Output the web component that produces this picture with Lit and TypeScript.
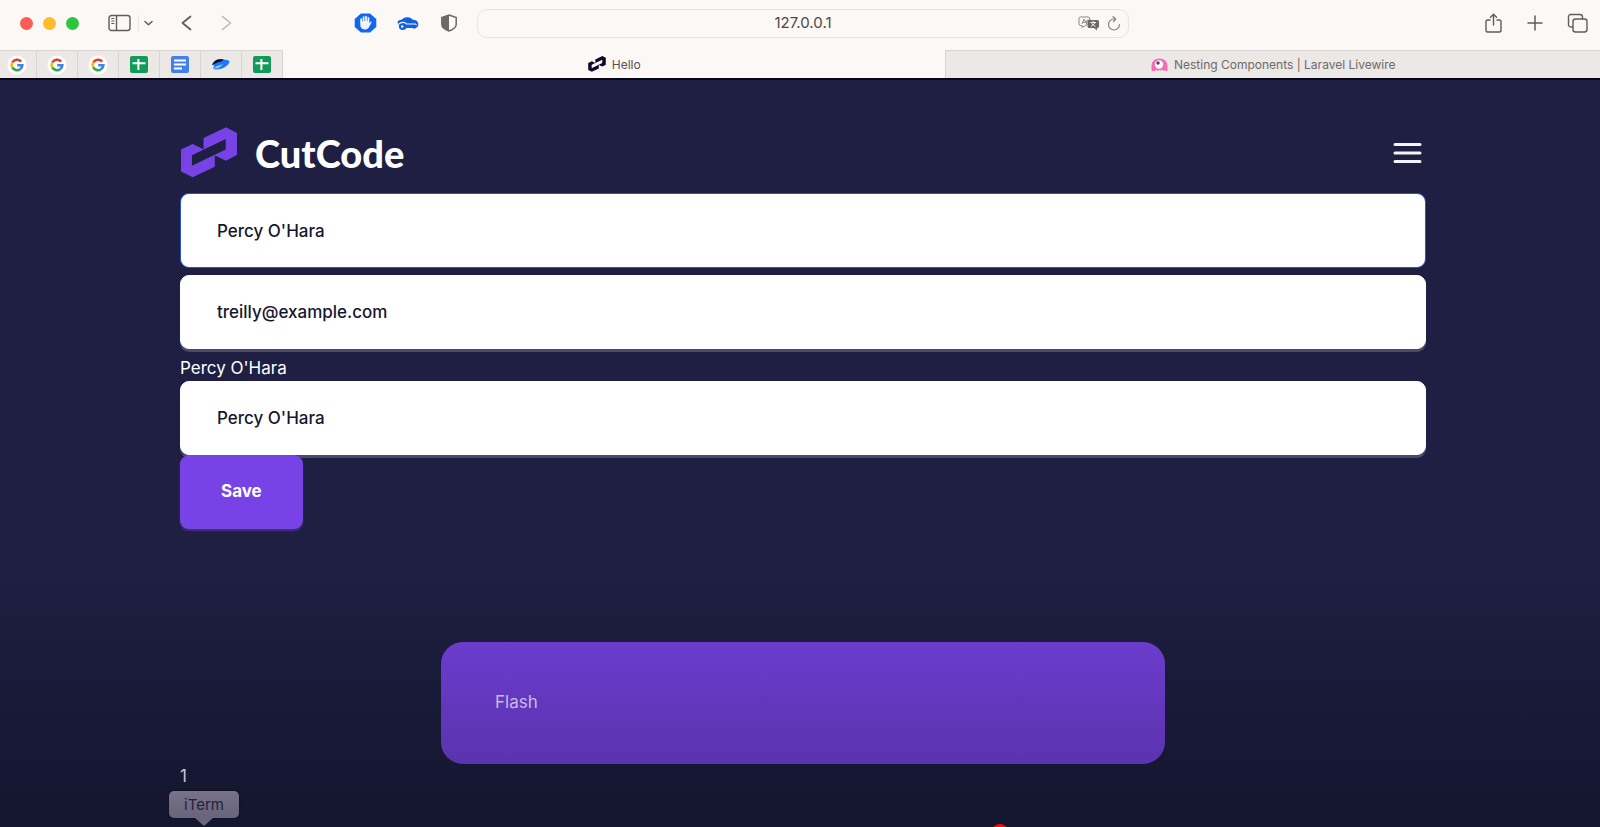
import { LitElement, html, css, svg } from "lit";
import { customElement, state } from "lit/decorators.js";

const cutcodeMark = svg`<path fill="currentColor" fill-rule="evenodd" d="M62 118L97 101L130 117V83L198 51L231 68V134L198 152L164 136V170L97 202L62 184ZM95 135V167L197 118V86Z"/>`;

const googleIcon = html`<svg width="20" height="20" viewBox="0 0 20 20" aria-hidden="true">
  <circle cx="10" cy="10" r="9.5" fill="#fff" />
  <g fill="none" stroke-width="2.6">
    <path d="M14.1 6.6A5.3 5.3 0 0 0 5.4 7.4" stroke="#e53b2e" />
    <path d="M5.4 7.3A5.3 5.3 0 0 0 5.3 12.5" stroke="#f9bb08" />
    <path d="M5.3 12.4A5.3 5.3 0 0 0 13.4 14" stroke="#33a753" />
    <path d="M13.3 14.1A5.3 5.3 0 0 0 15.3 10.3H10.2" stroke="#3f82f0" />
  </g>
</svg>`;

const sheetIcon = html`<svg width="18" height="18" viewBox="0 0 18 18" aria-hidden="true">
  <rect width="18" height="17" rx="2" fill="#129b58" />
  <path d="M2.5 7.2H15.5M8.4 3V14" stroke="#fff" stroke-width="2" />
</svg>`;

const docIcon = html`<svg width="18" height="18" viewBox="0 0 18 18" aria-hidden="true">
  <rect width="18" height="17" rx="2" fill="#4280ec" />
  <path d="M3 4.5H15M3 8.5H15M3 12.5H11" stroke="#fff" stroke-width="1.8" />
</svg>`;

const dolphinIcon = html`<svg width="20" height="18" viewBox="0 0 20 18" aria-hidden="true">
  <path d="M1 9C3 4 7 2.500 12 3.500C15 3.800 18 4 18.500 5.500C18.500 9 12 13.500 5 13.500C2.500 13.500 1.500 12 3.500 9.500Z" fill="#1f79f3" />
  <path d="M1 9C3 4 7 2.500 13 3.700L9 6C6 6 4 8 1 9Z" fill="#07122e" />
  <path d="M3 12.500C5 9.500 9 9.500 12 8C10 11 6 13 3 12.500Z" fill="#a9d2fc" />
</svg>`;

@customElement("browser-bar")
class BrowserBar extends LitElement {
  static styles = css`
    :host {
      display: block;
      background: #fcf8f5;
      color: #5f5c59;
      font-family: Inter, "Liberation Sans", sans-serif;
      border-bottom: 2px solid #07071a;
    }
    button,
    a {
      display: flex;
      padding: 0;
      border: 0;
      background: none;
      color: inherit;
      text-decoration: none;
      font: inherit;
    }
    svg {
      display: block;
      flex: none;
    }
    .toolbar {
      display: grid;
      grid-template-columns: 477fr 652fr 471fr;
      align-items: center;
      height: 50px;
      padding-bottom: 4px;
      box-sizing: border-box;
    }
    .left,
    .right,
    .lights,
    .extensions {
      display: flex;
      align-items: center;
    }
    .left {
      padding-left: 20px;
    }
    .lights {
      gap: 10px;
      margin-right: 29px;
    }
    .light {
      width: 13px;
      height: 13px;
      border-radius: 50%;
    }
    .close {
      background: #fb5d55;
    }
    .minimise {
      background: #fdbb2d;
    }
    .zoom {
      background: #28c73f;
    }
    .divider {
      width: 1px;
      height: 16px;
      margin: 0 5px 0 7px;
      background: #ebe6e3;
    }
    .back {
      margin: 0 29px 0 28px;
    }
    .forward {
      color: #b9b5b2;
    }
    .extensions {
      gap: 20px;
      margin-left: 122px;
    }
    .address {
      display: grid;
      grid-template-columns: 50px 1fr 50px;
      align-items: center;
      height: 29px;
      box-sizing: border-box;
      border: 1px solid #e8e3e0;
      border-radius: 10px;
    }
    .url {
      width: 100%;
      padding: 0;
      border: 0;
      outline: 0;
      background: none;
      font: 15px/20px Inter, sans-serif;
      text-align: center;
      color: #4c4947;
    }
    .tools {
      display: flex;
      align-items: center;
      gap: 7px;
    }
    .right {
      justify-content: flex-end;
      gap: 24px;
      padding-right: 12px;
    }
    .tabs {
      display: grid;
      grid-template-columns: auto 663fr 655fr;
      height: 28px;
      font-size: 12px;
    }
    .pins {
      display: flex;
    }
    .pin {
      width: 41px;
      box-sizing: border-box;
      align-items: center;
      justify-content: center;
      background: #ece8e6;
      border-top: 1px solid #d8d4d1;
      border-right: 1px solid #d8d4d1;
    }
    .pin:first-child {
      width: 37px;
      padding-right: 3px;
    }
    .tab {
      align-items: center;
      justify-content: center;
      gap: 6px;
    }
    .current {
      color: #55524f;
    }
    .mark {
      color: #0b0a2b;
    }
    .other {
      background: #ece8e6;
      border-top: 1px solid #d8d4d1;
      border-left: 1px solid #d8d4d1;
      color: #6e6a68;
    }
  `;

  render() {
    const pins = [
      ["Google", googleIcon],
      ["Google", googleIcon],
      ["Google", googleIcon],
      ["Sheets", sheetIcon],
      ["Docs", docIcon],
      ["Dolphin", dolphinIcon],
      ["Sheets", sheetIcon],
    ];
    return html`
      <div class="toolbar">
        <div class="left">
          <div class="lights">
            <button class="light close" aria-label="Close"></button>
            <button class="light minimise" aria-label="Minimise"></button>
            <button class="light zoom" aria-label="Zoom"></button>
          </div>
          <button aria-label="Sidebar">
            <svg width="23" height="18" viewBox="0 0 23 18" fill="none" stroke="currentColor">
              <rect x="1" y="1.500" width="21" height="15" rx="2.500" stroke-width="1.400" />
              <path d="M8.500 1.500V16.500" stroke-width="1.400" />
              <path d="M3.300 4.500H6.300M3.300 7H6.300M3.300 9.500H6.300" />
            </svg>
          </button>
          <span class="divider"></span>
          <button aria-label="Tab groups">
            <svg width="9" height="8" viewBox="0 0 9 8" fill="none" stroke="currentColor" stroke-width="1.500" stroke-linecap="round" stroke-linejoin="round"><path d="M1 2.500L4.500 5.800L8 2.500" /></svg>
          </button>
          <button class="back" aria-label="Back">
            <svg width="11" height="16" viewBox="0 0 11 16" fill="none" stroke="currentColor" stroke-width="1.700" stroke-linecap="round" stroke-linejoin="round"><path d="M9.500 1.500L1.500 8L9.500 14.500" /></svg>
          </button>
          <button class="forward" aria-label="Forward">
            <svg width="11" height="16" viewBox="0 0 11 16" fill="none" stroke="currentColor" stroke-width="1.500" stroke-linecap="round" stroke-linejoin="round"><path d="M1.500 1.500L9.500 8L1.500 14.500" /></svg>
          </button>
          <div class="extensions">
            <button aria-label="Ad blocker">
              <svg width="23" height="20" viewBox="0 0 23 20">
                <path d="M7 0.500H16L22.300 6V14L16 19.500H7L0.700 14V6Z" fill="#1266f2" />
                <path d="M7.200 9V6.200M9.600 9V4.200M12 9V3.600M14.400 9V4.800" stroke="#f1f3f8" stroke-width="1.800" stroke-linecap="round" />
                <path d="M6.300 8H15.300V10.500L16.600 8.800Q18 8 17.400 9.700L14.800 14.500Q13.500 16.500 11.500 16.500Q6.300 16.500 6.300 11.500Z" fill="#f1f3f8" />
              </svg>
            </button>
            <button aria-label="Key car">
              <svg width="22" height="15" viewBox="0 0 22 15">
                <path d="M0.500 6.500Q1 4 4.500 3.800Q6.500 0.800 10.500 1.200Q13.500 1 15.500 3.500Q20 4 21 6.500Q22 10.500 19.500 11.500Q18 13.500 15.500 12L9.500 12Q8 14.500 5 14Q1.500 13.500 2 9.500Z" fill="#1160dc" />
                <path d="M1.500 8.300Q3.500 6 7.500 6.500L9.500 8H18.500L19.500 9.200" fill="none" stroke="#fcf8f5" stroke-width="1.100" />
                <circle cx="5.200" cy="10.500" r="1.200" fill="#fcf8f5" />
              </svg>
            </button>
            <button aria-label="Privacy report">
              <svg width="20" height="18" viewBox="0 0 20 18">
                <path d="M10 1L17.200 3.500V10.500Q17 14.500 10 17Q3 14.500 2.800 10.500V3.500Z" fill="none" stroke="#6d6a66" stroke-width="1.500" />
                <path d="M10 1V17Q3 14.500 2.800 10.500V3.500Z" fill="#6d6a66" />
              </svg>
            </button>
          </div>
        </div>
        <div class="address">
          <span></span>
          <input class="url" aria-label="Address" value="127.0.0.1" />
          <div class="tools">
            <button aria-label="Translate">
              <svg width="22" height="15" viewBox="0 0 22 15">
                <path d="M2.500 1H10Q12 1 12 3V4H10Q8.500 4 8.500 6V9L4 11.500V9.500H2.500Q1 9.500 1 8V2.500Q1 1 2.500 1Z" fill="none" stroke="#8b8784" />
                <path d="M4 8L6.200 3L8 7M4.800 6.300H7.500" fill="none" stroke="#8b8784" />
                <path d="M11 4H19.500Q21 4 21 5.500V10.500Q21 12 19.500 12H19V14.500L16 12H11Q9.500 12 9.500 10.500V5.500Q9.500 4 11 4Z" fill="#6d6a66" />
                <path d="M12.500 6.500H18M15.200 5V6.500M13 10.500L17 7M13.500 7.500L17.500 10.500" fill="none" stroke="#f5f0ee" />
              </svg>
            </button>
            <button aria-label="Reload">
              <svg width="14" height="15" viewBox="0 0 14 15" fill="none" stroke="#85817e" stroke-width="1.200" stroke-linecap="round" stroke-linejoin="round"><path d="M8.500 3H7A5.500 5.500 0 1 0 12.500 8.500M6 0.700L8.700 3L6.500 5.500" /></svg>
            </button>
          </div>
        </div>
        <div class="right">
          <button aria-label="Share">
            <svg width="19" height="21" viewBox="0 0 19 21" fill="none" stroke="currentColor" stroke-width="1.400" stroke-linecap="round" stroke-linejoin="round"><path d="M6 7H3.800Q2 7 2 8.800V17.200Q2 19 3.800 19H15.200Q17 19 17 17.200V8.800Q17 7 15.200 7H13M9.500 12V1.500M6.500 4.300L9.500 1.300L12.500 4.300" /></svg>
          </button>
          <button aria-label="New tab">
            <svg width="16" height="16" viewBox="0 0 16 16" stroke="currentColor" stroke-width="1.500" stroke-linecap="round"><path d="M8 1V15M1 8H15" /></svg>
          </button>
          <button aria-label="Tab overview">
            <svg width="21" height="20" viewBox="0 0 21 20" fill="none" stroke="currentColor" stroke-width="1.400"><rect x="6" y="6" width="14" height="13" rx="2.500" /><path d="M6 14H4Q1.500 14 1.500 11.500V4Q1.500 1.500 4 1.500H13Q15.500 1.500 15.500 4V6" /></svg>
          </button>
        </div>
      </div>
      <nav class="tabs" aria-label="Tabs">
        <div class="pins">
          ${pins.map(([name, icon]) => html`<a class="pin" href="#" aria-label=${name}>${icon}</a>`)}
        </div>
        <a class="tab current" href="#" aria-current="page">
          <svg class="mark" width="18" height="16" viewBox="60 50 173 154" aria-hidden="true">${cutcodeMark}</svg>
          <span>Hello</span>
        </a>
        <a class="tab other" href="#">
          <svg width="17" height="14" viewBox="0 0 17 14" aria-hidden="true">
            <path d="M8.500 0.500Q16 0.500 16.500 8V12.500Q15 14 14 12Q12.500 14 11.500 11.500Q10 13 8 12Q6 14 5 11.500Q3.500 14 2.500 12.500Q1 14 0.500 12V8Q1 0.500 8.500 0.500Z" fill="#f36db0" />
            <circle cx="8" cy="6.500" r="4.200" fill="#fff" />
            <circle cx="7" cy="5" r="1.700" fill="#40438c" />
          </svg>
          <span>Nesting Components | Laravel Livewire</span>
        </a>
      </nav>
    `;
  }
}

@customElement("app-root")
class AppRoot extends LitElement {
  static styles = css`
    :host {
      display: flex;
      flex-direction: column;
      height: 100vh;
      overflow: hidden;
      font-family: Inter, "Liberation Sans", sans-serif;
      font-size: 17px;
      line-height: 25px;
      color: #fff;
      background: #1e1f43;
    }
    .page {
      position: relative;
      flex: 1;
      overflow: hidden;
      padding: 47px 174px 0 180px;
      background: linear-gradient(#1e1f43 0 64%, #181936 86%, #14162f);
    }
    .header {
      display: flex;
      align-items: center;
      justify-content: space-between;
      height: 51px;
      margin-bottom: 15px;
    }
    .brand {
      display: flex;
      align-items: center;
      gap: 17px;
      color: #fff;
      text-decoration: none;
      font: 900 38px/50px Lato, sans-serif;
    }
    .mark {
      color: #7843e6;
    }
    .menu {
      display: flex;
      padding: 0;
      margin-right: 4px;
      border: 0;
      background: none;
      color: #f4f4fa;
    }
    .field {
      display: block;
      width: 100%;
      height: 74px;
      box-sizing: border-box;
      padding: 0 36px;
      border: 1px solid #fff;
      border-radius: 9px;
      outline: 0;
      background: #fff;
      box-shadow: 0 3px #494b68;
      font: 500 17px/24px Inter, sans-serif;
      color: #17162f;
    }
    .active {
      height: 75px;
      border-color: #2257c4;
      box-shadow: none;
    }
    .field + .field,
    .name {
      margin-top: 7px;
    }
    .name {
      display: block;
    }
    .save {
      position: relative;
      display: block;
      height: 74px;
      padding: 0 41px 2px;
      border: 0;
      border-radius: 9px;
      background: #7843e6;
      box-shadow: 0 2px 2px #45307f;
      font: 700 17px/24px Inter, sans-serif;
      color: #fff;
    }
    .flash {
      max-width: 724px;
      box-sizing: border-box;
      margin: 113px auto 0;
      padding: 48px 54px 49px;
      border-radius: 22px;
      background: linear-gradient(#6b3ccc, #5b33ae);
      color: #cbb9e6;
    }
    .count {
      color: #c9c9d3;
    }
    .tooltip {
      position: absolute;
      left: 169px;
      bottom: 9px;
      padding: 1px 15px;
      border-radius: 5px;
      background: linear-gradient(#77728a, #69657c);
      box-shadow: 0 0 2px #090918;
      font-size: 15px;
      color: #23213a;
    }
    .tooltip::after {
      content: "";
      position: absolute;
      top: 100%;
      left: calc(50% - 9px);
      border: 9px solid transparent;
      border-top: 8px solid #69657c;
      border-bottom: 0;
    }
    .playhead {
      position: absolute;
      left: 992px;
      bottom: -13px;
      width: 16px;
      height: 16px;
      border-radius: 50%;
      background: #f00d0d;
    }
  `;

  @state() private name = "Percy O'Hara";

  render() {
    return html`
      <browser-bar></browser-bar>
      <main class="page">
        <header class="header">
          <a class="brand" href="#">
            <svg class="mark" width="58" height="51" viewBox="60 50 173 154" aria-hidden="true">${cutcodeMark}</svg>
            <span>CutCode</span>
          </a>
          <button class="menu" aria-label="Menu">
            <svg width="29" height="22" viewBox="0 0 29 22" stroke="currentColor" stroke-width="3" stroke-linecap="round"><path d="M2 2.500H27M2 11H27M2 19.500H27" /></svg>
          </button>
        </header>
        <input class="field active" aria-label="Name" .value=${this.name} />
        <input class="field" type="email" aria-label="Email" value="treilly@example.com" />
        <label class="name" for="child-name">${this.name}</label>
        <input class="field" id="child-name" .value=${this.name} />
        <button class="save">Save</button>
        <div class="flash" role="status">Flash</div>
        <div class="count">1</div>
        <div class="tooltip" role="tooltip">iTerm</div>
        <span class="playhead"></span>
      </main>
    `;
  }
}
